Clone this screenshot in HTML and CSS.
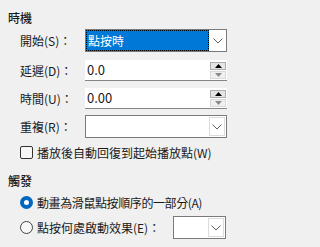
FILE: index.html
```html
<!DOCTYPE html>
<html lang="zh-Hant">
<head>
<meta charset="utf-8">
<link rel="stylesheet" href="styles.css">
</head>
<body>
<div class="pane">
  <div class="title t1">時機</div>

  <div class="row r1">
    <span class="label">開始(S)：</span>
    <div class="combo focus">
      <div class="sel-text"><span>點按時</span></div>
      <div class="drop"><svg viewBox="0 0 10 6" width="10" height="6"><path d="M0.5 0.5 L5 5 L9.5 0.5" fill="none" stroke="#606060" stroke-width="1"/></svg></div>
    </div>
  </div>

  <div class="row r2">
    <span class="label">延遲(D)：</span>
    <div class="spin">
      <span class="val">0.0</span>
      <div class="btns">
        <div class="up"><svg viewBox="0 0 7 4" width="7" height="4"><path d="M0 4 L3.5 0 L7 4Z" fill="#000"/></svg></div>
        <div class="down"><svg viewBox="0 0 7 4" width="7" height="4"><path d="M0 0 L3.5 4 L7 0Z" fill="#8a8a8a"/></svg></div>
      </div>
    </div>
  </div>

  <div class="row r3">
    <span class="label">時間(U)：</span>
    <div class="spin">
      <span class="val">0.00</span>
      <div class="btns">
        <div class="up"><svg viewBox="0 0 7 4" width="7" height="4"><path d="M0 4 L3.5 0 L7 4Z" fill="#000"/></svg></div>
        <div class="down"><svg viewBox="0 0 7 4" width="7" height="4"><path d="M0 0 L3.5 4 L7 0Z" fill="#8a8a8a"/></svg></div>
      </div>
    </div>
  </div>

  <div class="row r4">
    <span class="label">重複(R)：</span>
    <div class="combo plain">
      <div class="sel-text"></div>
      <div class="drop boxed"><svg viewBox="0 0 10 6" width="10" height="6"><path d="M0.5 0.5 L5 5 L9.5 0.5" fill="none" stroke="#606060" stroke-width="1"/></svg></div>
    </div>
  </div>

  <div class="row check-row">
    <span class="checkbox"></span>
    <span class="opt">播放後自動回復到起始播放點(W)</span>
  </div>

  <div class="title t2">觸發</div>

  <div class="row radio-row rr1">
    <span class="radio on"></span>
    <span class="opt tight">動畫為滑鼠點按順序的一部分(A)</span>
  </div>

  <div class="row radio-row rr2">
    <span class="radio"></span>
    <span class="opt">點按何處啟動效果(E)：</span>
    <div class="combo small plain">
      <div class="sel-text"></div>
      <div class="drop boxed"><svg viewBox="0 0 10 6" width="10" height="6"><path d="M0.5 0.5 L5 5 L9.5 0.5" fill="none" stroke="#606060" stroke-width="1"/></svg></div>
    </div>
  </div>
</div>
</body>
</html>
```

FILE: styles.css
```css
html, body {
  margin: 0;
  padding: 0;
  background: #f0f0f0;
}
body {
  font-family: "Noto Sans CJK TC", "Noto Sans", sans-serif;
  font-size: 12px;
  color: #1a1a1a;
  width: 235px;
  height: 247px;
  overflow: hidden;
}
.pane {
  display: flex;
  flex-direction: column;
}
.title {
  padding-left: 8px;
  height: 16px;
  line-height: 16px;
  font-weight: 500;
}
.t1 { margin-top: 10px; }
.t2 { margin-top: 14px; }

.row {
  display: flex;
  align-items: center;
  padding-left: 20px;
}
.label {
  width: 65px;
  white-space: nowrap;
}
.r1 { margin-top: 3px; }
.r2 { margin-top: 8px; }
.r3 { margin-top: 7px; }
.r4 { margin-top: 6px; }

.combo {
  box-sizing: border-box;
  width: 142px;
  height: 23px;
  border: 1px solid #7a7a7a;
  background: #fff;
  display: flex;
  align-items: stretch;
}
.combo .sel-text {
  flex: 1;
  display: flex;
}
.combo.focus .sel-text span {
  flex: 1;
  background: #0078d7;
  color: #fff;
  outline: 1px dotted #000;
  outline-offset: -1px;
  padding-left: 2px;
  line-height: 21px;
}
.combo .drop {
  width: 17px;
  display: flex;
  align-items: center;
  justify-content: center;
}
.combo .drop.boxed {
  box-sizing: border-box;
  margin: 1px;
  width: 16px;
  border: 1px solid #dcdcdc;
}
.combo.small {
  width: 53px;
  height: 23px;
  margin-left: auto;
  margin-right: 9px;
}

.spin {
  box-sizing: border-box;
  width: 142px;
  height: 21px;
  background: #fff;
  border-bottom: 1px solid #868686;
  display: flex;
  align-items: center;
}
.spin .val {
  flex: 1;
  padding-left: 2px;
  line-height: 20px;
  font-size: 13px;
}
.spin .btns {
  display: flex;
  flex-direction: column;
  gap: 1px;
  margin-right: 1px;
}
.spin .btns div {
  box-sizing: border-box;
  width: 16px;
  height: 8px;
  display: flex;
  align-items: center;
  justify-content: center;
}
.spin .up {
  border: 1px solid #adadad;
  background: #e5e5e5;
}
.spin .down {
  border: 1px solid #d9d9d9;
  background: #f0f0f0;
}

.check-row { margin-top: 8px; height: 13px; }
.checkbox {
  box-sizing: border-box;
  width: 13px;
  height: 13px;
  border: 1px solid #333;
  border-radius: 2px;
  background: #f7f7f7;
  margin-right: 4px;
}
.opt { white-space: nowrap; }
.opt.tight { letter-spacing: -0.4px; }

.radio-row .radio {
  box-sizing: border-box;
  width: 13px;
  height: 13px;
  border-radius: 50%;
  border: 1px solid #444;
  background: #f7f7f7;
  margin-right: 4px;
  flex: none;
}
.radio.on {
  border: 4px solid #0067c0;
  background: #fff;
}
.rr1 { margin-top: 7px; height: 13px; }
.rr2 { margin-top: 7px; height: 23px; }
```
